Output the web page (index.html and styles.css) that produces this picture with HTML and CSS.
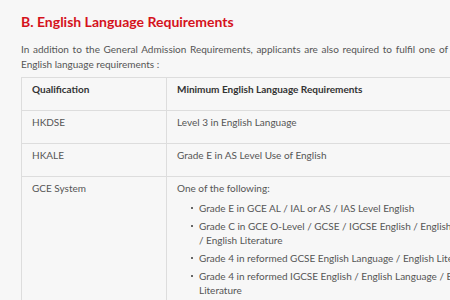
FILE: index.html
```html
<!DOCTYPE html>
<html lang="en">
<head>
  <meta charset="UTF-8">
  <title>English Language Requirements</title>
  <link rel="stylesheet" href="styles.css">
</head>
<body>
  <div class="content">
    <h2>B. English Language Requirements</h2>
    <p class="intro">In addition to the General Admission Requirements, applicants are also required to fulfil one of the following English language requirements :</p>

    <table class="req">
      <tr>
        <th class="qual">Qualification</th>
        <th>Minimum English Language Requirements</th>
      </tr>
      <tr>
        <td>HKDSE</td>
        <td>Level 3 in English Language</td>
      </tr>
      <tr>
        <td>HKALE</td>
        <td>Grade E in AS Level Use of English</td>
      </tr>
      <tr>
        <td>GCE System</td>
        <td>
          One of the following:
          <ul>
            <li>Grade E in GCE AL / IAL or AS / IAS Level English</li>
            <li>Grade C in GCE O-Level / GCSE / IGCSE English / English Language / English Literature</li>
            <li>Grade 4 in reformed GCSE English Language / English Literature</li>
            <li>Grade 4 in reformed IGCSE English / English Language / English Literature</li>
          </ul>
        </td>
      </tr>
    </table>
  </div>
</body>
</html>
```

FILE: styles.css
```css
* {
  margin: 0; padding: 0; box-sizing: border-box;
  font-family: 'Lato', 'Liberation Sans', sans-serif;
}
body {
  background: #f7f7f7;
  color: #555;
  overflow: hidden;
}
.content {
  width: 510px;
  padding: 12px 0 0 21px;
}
.content h2 {
  color: #d5121c;
  font-size: 14px;
  font-weight: bold;
  line-height: 20px;
  margin-bottom: 10px;
}
.intro {
  font-size: 10px;
  line-height: 15px;
  text-align: justify;
  margin-bottom: 5px;
}
table.req {
  border-collapse: collapse;
  width: 100%;
  font-size: 10px;
  line-height: 14px;
}
.req th, .req td {
  border: 1px solid #ddd;
  text-align: left;
  vertical-align: top;
  padding: 4px 10px 14px;
}
.req th {
  color: #333;
  font-weight: bold;
}
.req th.qual { width: 145px; }
.req ul {
  list-style: none;
  margin: 6px 0 0 12px;
}
.req li {
  position: relative;
  padding-left: 10px;
  margin-bottom: 4px;
}
.req li::before {
  content: "";
  position: absolute;
  left: 2px;
  top: 6px;
  width: 2px;
  height: 2px;
  background: #666;
}
```
